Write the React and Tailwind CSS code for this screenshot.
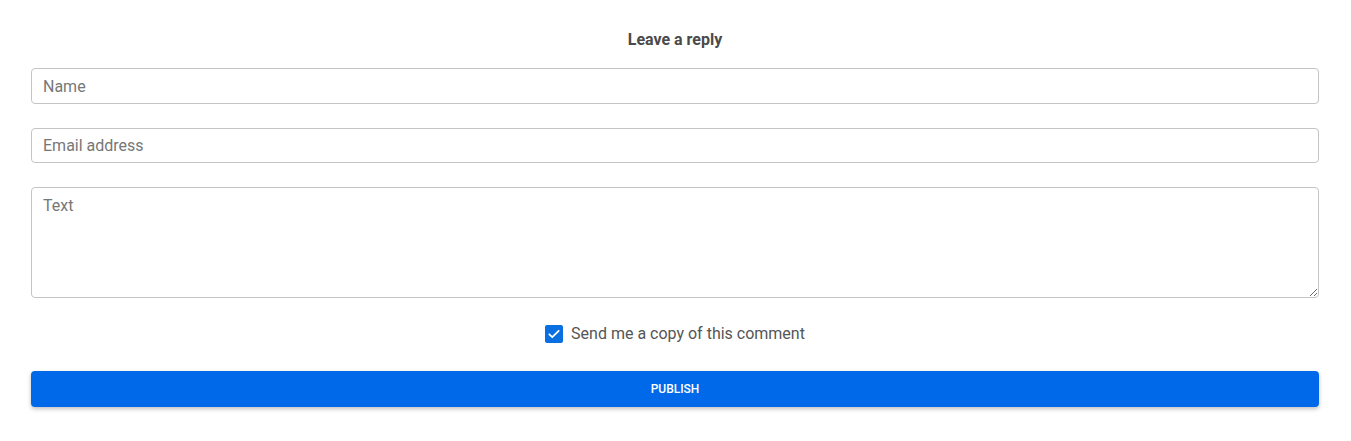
import React from "react";

export default function App() {
  return (
    <div className="w-[1351px] h-[441px] bg-white pl-[31px] pr-[32px] pt-[29px]" style={{ fontFamily: "Roboto, 'Liberation Sans', sans-serif" }}>
      <h3 className="text-center text-[16px] leading-[22px] font-bold text-[#4a4a4a]">Leave a reply</h3>
      <div className="mt-[17px] flex flex-col">
        <input
          className="h-[36px] w-full rounded-[4px] border border-[#c4c4c4] px-[11px] text-[16px] text-[#555] placeholder:text-[#777] outline-none"
          placeholder="Name"
        />
        <input
          className="mt-[24px] h-[35px] w-full rounded-[4px] border border-[#c4c4c4] px-[11px] text-[16px] text-[#555] placeholder:text-[#777] outline-none"
          placeholder="Email address"
        />
        <textarea
          className="mt-[24px] h-[111px] w-full rounded-[4px] border border-[#c4c4c4] px-[11px] pt-[8px] text-[16px] leading-[20px] text-[#555] placeholder:text-[#777] outline-none"
          placeholder="Text"
        />
        <label className="mt-[25px] flex items-center justify-center gap-[8px] h-[22px]">
          <span className="flex h-[18px] w-[18px] items-center justify-center rounded-[2px] bg-[#0a6fe0]">
            <svg width="14" height="14" viewBox="0 0 24 24" fill="none" stroke="white" strokeWidth="3" strokeLinecap="round" strokeLinejoin="round">
              <path d="M4 12.5l5 5L20 6.5" />
            </svg>
          </span>
          <span className="text-[16px] text-[#555]">Send me a copy of this comment</span>
        </label>
        <button className="mt-[26px] h-[36px] w-full rounded-[4px] bg-[#0069e9] text-[12px] font-medium text-white shadow-[0_2px_4px_rgba(0,0,0,0.25)]">
          PUBLISH
        </button>
      </div>
    </div>
  );
}
